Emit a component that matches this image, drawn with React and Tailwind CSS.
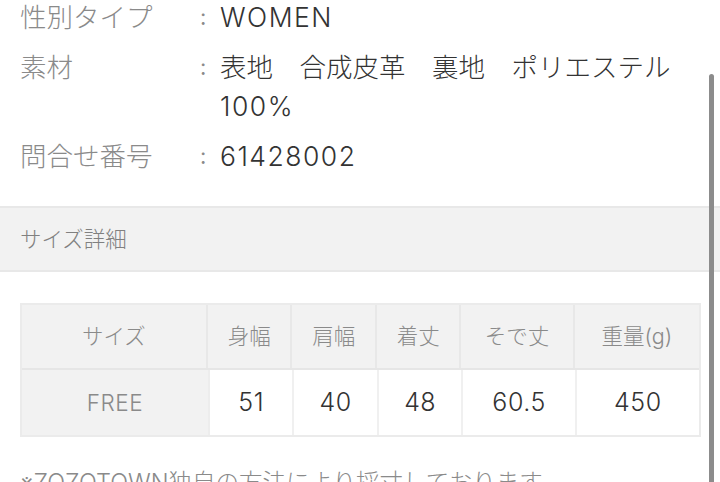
export default function App() {
  const font = { fontFamily: 'Inter, "Noto Sans CJK JP", "Noto Sans", sans-serif' };
  const rows = [
    { label: '性別タイプ', value: ['WOMEN'] },
    { label: '素材', value: ['表地　合成皮革　裏地　ポリエステル', '100%'] },
    { label: '問合せ番号', value: ['61428002'] },
  ];
  const heads = [
    { t: 'サイズ', w: 'w-[187px]' },
    { t: '身幅', w: 'w-[85px]' },
    { t: '肩幅', w: 'w-[85px]' },
    { t: '着丈', w: 'w-[85px]' },
    { t: 'そで丈', w: 'w-[114px]' },
    { t: '重量(g)', w: 'w-[125px]' },
  ];
  const vals = ['51', '40', '48', '60.5', '450'];
  return (
    <div className="relative w-[720px] h-[482px] overflow-hidden bg-white" style={font}>
      <div className="flex flex-col gap-[11px] mt-[-2px] px-[20px]">
        {rows.map((r) => (
          <div key={r.label} className="flex text-[26.5px] leading-[39px]">
            <div className="w-[180px] shrink-0 text-[#8a8a8a] font-light">{r.label}</div>
            <div className="w-[20px] shrink-0 text-[#8a8a8a] text-[22px]">:</div>
            <div className="w-[480px] text-[#333333] font-light flex flex-col">
              {r.value.map((v, i) => (
                <span key={v} className={`whitespace-nowrap ${i === 0 && r.label === '素材' ? '' : 'tracking-[1.5px]'}`}>{v}</span>
              ))}
            </div>
          </div>
        ))}
      </div>
      <div className="mt-[30px] h-[66px] bg-[#f2f2f2] border-y-2 border-[#e8e8e8] flex items-center px-[20px]">
        <span className="text-[21.5px] text-[#808080] font-light">サイズ詳細</span>
      </div>
      <div className="mt-[31px] mx-[20px] w-[681px] border-2 border-[#ebebeb] flex flex-col">
        <div className="flex h-[65px] bg-[#f2f2f2] border-b-2 border-[#e6e6e6]">
          {heads.map((h, i) => (
            <div
              key={h.t}
              className={`${h.w} flex items-center justify-center text-[21.5px] text-[#8a8a8a] font-light ${i < heads.length - 1 ? 'border-r-2 border-[#e8e8e8]' : ''}`}
            >
              {h.t}
            </div>
          ))}
        </div>
        <div className="flex h-[65px]">
          <div className="w-[187px] flex items-center justify-center bg-[#f2f2f2] text-[22.5px] text-[#8a8a8a] font-light tracking-[0.5px]">FREE</div>
          {vals.map((v, i) => (
            <div
              key={v}
              className={`${heads[i + 1].w} flex items-center justify-center text-[25px] text-[#333333] font-light tracking-[0.5px] ${i === 0 ? 'border-l-2 border-[#ededed]' : 'border-l-2 border-[#f0f0f0]'}`}
            >
              {v}
            </div>
          ))}
        </div>
      </div>
      <div className="mt-[28px] px-[20px] text-[23.5px] text-[#8a8a8a] font-light whitespace-nowrap">
        ※ZOZOTOWN独自の方法により採寸しております。
      </div>
      <div className="absolute left-[709px] top-[74px] w-[5px] h-[420px] rounded-full bg-[#8c8c8c]" />
    </div>
  );
}
